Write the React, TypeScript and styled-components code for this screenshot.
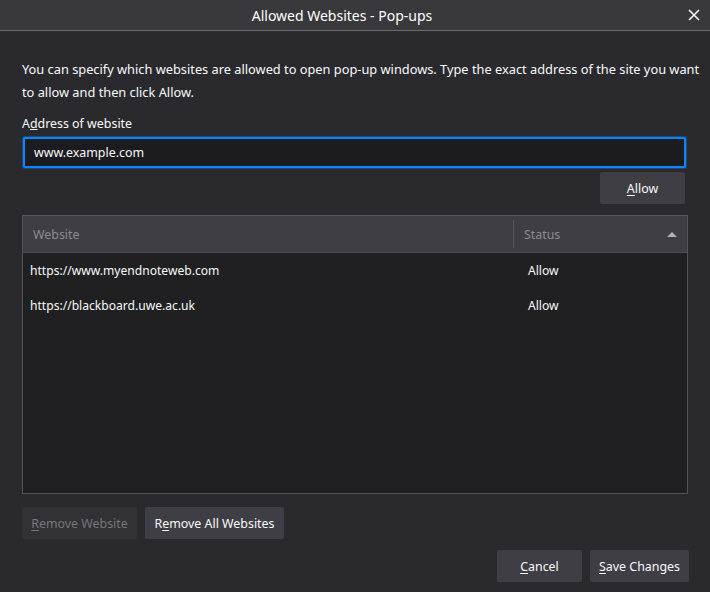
import React, { useState } from 'react';
import styled, { createGlobalStyle } from 'styled-components';

const GlobalStyle = createGlobalStyle`
    html, body {
        margin: 0;
        padding: 0;
        background: #2a2a2e;
    }
    body {
        font-family: 'Noto Sans', 'Open Sans', sans-serif;
        color: #f9f9fa;
    }
`;

const Window = styled.div`
    width: 710px;
    height: 592px;
    display: flex;
    flex-direction: column;
    background: #2a2a2e;
    overflow: hidden;
`;

const TitleBar = styled.div`
    height: 31px;
    position: relative;
    display: flex;
    align-items: center;
    justify-content: center;
    padding-right: 26px;
    background: #38383d;
    border-bottom: 1px solid #6c6c70;
    font-size: 14px;
    color: #ffffff;
`;

const CloseButton = styled.button`
    position: absolute;
    right: 8px;
    top: 7px;
    width: 16px;
    height: 16px;
    padding: 0;
    border: 0;
    background: none;
    display: flex;
    align-items: center;
    justify-content: center;
`;

const Body = styled.div`
    flex: 1;
    display: flex;
    flex-direction: column;
    padding: 27px 22px 10px 22px;
    font-size: 12.4px;
`;

const Description = styled.p`
    margin: 0;
    font-size: 12.8px;
    line-height: 23px;
    white-space: nowrap;
`;

const Label = styled.label`
    margin-top: 11px;
    line-height: 18px;
    display: block;
`;

const AddressInput = styled.input`
    margin-top: 4px;
    margin-left: 1px;
    width: 663px;
    height: 31px;
    box-sizing: border-box;
    background: #1c1b20;
    border: 2px solid #0a84ff;
    border-radius: 2px;
    box-shadow: 0 0 0 1px rgba(10, 132, 255, 0.35);
    color: #f9f9fa;
    font-family: inherit;
    font-size: 12.4px;
    padding: 0 9px;
    outline: none;
`;

const Row = styled.div<{ $justify?: string }>`
    display: flex;
    justify-content: ${(p) => p.$justify || 'flex-start'};
    gap: 8px;
`;

const Button = styled.button<{ $width: number }>`
    width: ${(p) => p.$width}px;
    height: 32px;
    border: 0;
    border-radius: 2px;
    color: ${(p) => (p.disabled ? '#77767b' : '#f9f9fa')};
    background: ${(p) => (p.disabled ? '#323236' : '#3f3e44')};
    font-family: inherit;
    font-size: 12.4px;
    padding: 0;
    & u {
        text-underline-offset: 2px;
    }
`;

const AllowRow = styled(Row)`
    margin-top: 4px;
    padding-right: 3px;
`;

const Table = styled.div`
    margin-top: 11px;
    height: 279px;
    box-sizing: border-box;
    border: 1px solid #545357;
    background: #202023;
    display: flex;
    flex-direction: column;
`;

const HeaderRow = styled.div`
    height: 36px;
    display: grid;
    grid-template-columns: 490px 1fr;
    background: #3f3e44;
    border-bottom: 1px solid #4a4a4f;
    color: #8c8b90;
`;

const HeaderCell = styled.div<{ $divider?: boolean }>`
    display: flex;
    align-items: center;
    justify-content: space-between;
    padding: 0 10px;
    border-left: ${(p) => (p.$divider ? '1px solid #57565b' : '0')};
    margin: ${(p) => (p.$divider ? '4px 0' : '0')};
`;

const DataRow = styled.div`
    height: 35px;
    display: grid;
    grid-template-columns: 498px 1fr;
    align-items: center;
    font-size: 12.1px;
    &:first-of-type {
        margin-top: 1px;
    }
`;

const DataCell = styled.div`
    padding: 0 7px;
`;

const BottomRow = styled(Row)`
    margin-top: 13px;
`;

const FooterRow = styled(Row)`
    margin-top: 11px;
    margin-right: -1px;
`;

const sites = [
    { url: 'https://www.myendnoteweb.com', status: 'Allow' },
    { url: 'https://blackboard.uwe.ac.uk', status: 'Allow' },
];

export default function App(): JSX.Element {
    const [address, setAddress] = useState('www.example.com');

    return (
        <Window>
            <GlobalStyle />
            <TitleBar>
                Allowed Websites - Pop-ups
                <CloseButton>
                    <svg width="12" height="12" viewBox="0 0 12 12">
                        <path d="M1 1L11 11M11 1L1 11" stroke="#f9f9fa" strokeWidth="1.6" />
                    </svg>
                </CloseButton>
            </TitleBar>
            <Body>
                <Description>
                    You can specify which websites are allowed to open pop-up windows. Type the exact address of the site you want
                    <br />
                    to allow and then click Allow.
                </Description>
                <Label>
                    A<u>d</u>dress of website
                </Label>
                <AddressInput value={address} onChange={(e) => setAddress(e.target.value)} />
                <AllowRow $justify="flex-end">
                    <Button $width={85}>
                        <u>A</u>llow
                    </Button>
                </AllowRow>
                <Table>
                    <HeaderRow>
                        <HeaderCell>Website</HeaderCell>
                        <HeaderCell $divider>
                            Status
                            <svg width="10" height="6" viewBox="0 0 10 6">
                                <path d="M0 6L5 1L10 6Z" fill="#b1b1b3" />
                            </svg>
                        </HeaderCell>
                    </HeaderRow>
                    {sites.map((s) => (
                        <DataRow key={s.url}>
                            <DataCell>{s.url}</DataCell>
                            <DataCell>{s.status}</DataCell>
                        </DataRow>
                    ))}
                </Table>
                <BottomRow>
                    <Button $width={115} disabled>
                        <u>R</u>emove Website
                    </Button>
                    <Button $width={139}>
                        R<u>e</u>move All Websites
                    </Button>
                </BottomRow>
                <FooterRow $justify="flex-end">
                    <Button $width={85}>
                        <u>C</u>ancel
                    </Button>
                    <Button $width={99}>
                        <u>S</u>ave Changes
                    </Button>
                </FooterRow>
            </Body>
        </Window>
    );
}
